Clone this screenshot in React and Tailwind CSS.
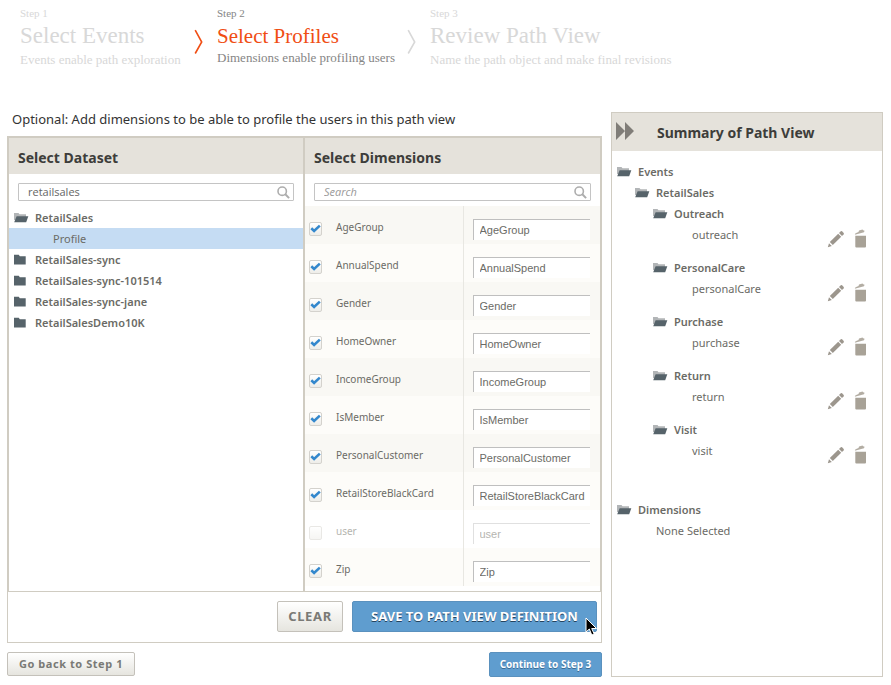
const steps = [
  { step: "Step 1", title: "Select Events", note: "Events enable path exploration", active: false, width: "w-[174px]" },
  { step: "Step 2", title: "Select Profiles", note: "Dimensions enable profiling users", active: true, width: "w-[190px]" },
  { step: "Step 3", title: "Review Path View", note: "Name the path object and make final revisions", active: false, width: "" },
];

const datasets = ["RetailSales-sync", "RetailSales-sync-101514", "RetailSales-sync-jane", "RetailSalesDemo10K"];

const dimensions = [
  "AgeGroup", "AnnualSpend", "Gender", "HomeOwner", "IncomeGroup",
  "IsMember", "PersonalCustomer", "RetailStoreBlackCard", "user", "Zip",
];

const events = [
  ["Outreach", "outreach"],
  ["PersonalCare", "personalCare"],
  ["Purchase", "purchase"],
  ["Return", "return"],
  ["Visit", "visit"],
];

function OpenFolder() {
  return (
    <svg width="15" height="11" viewBox="0 0 15 11" className="shrink-0" aria-hidden="true">
      <path d="M0 1h4.500l1 1.200h6.500v3.300L9 8H0z" fill="#b2b5b7" />
      <path d="M2.600 4.300H14.300L12.200 10.300H.2z" fill="#56636a" />
    </svg>
  );
}

function ClosedFolder() {
  return (
    <svg width="15" height="11" viewBox="0 0 15 11" className="shrink-0" aria-hidden="true">
      <path d="M0 .8h4.800l1 1.500h5.900v8.200H0z" fill="#56636a" />
    </svg>
  );
}

function Magnifier() {
  return (
    <svg width="13" height="13" viewBox="0 0 13 13" fill="none" stroke="#adadad" aria-hidden="true">
      <circle cx="5.200" cy="5.200" r="4.200" strokeWidth="1.600" />
      <path d="M8.300 8.300l3.800 3.800" strokeWidth="2" />
    </svg>
  );
}

function Chevron({ active }) {
  return (
    <svg width="10" height="26" viewBox="0 0 10 26" fill="none" stroke={active ? "#f04e14" : "#d8d8d8"} strokeWidth="1.600" className="mt-[29px] shrink-0" aria-hidden="true">
      <path d="M1.200 1.200L7.700 13 1.200 24.500" />
    </svg>
  );
}

function Pencil() {
  return (
    <svg width="18" height="18" viewBox="0 0 18 18" fill="#9c968d" aria-hidden="true">
      <path d="M.8 17.200l1.200-4 2.800 2.800z" />
      <path d="M2.800 12l8.400-8.300 3 3L5.800 15z" />
      <path d="M12 3l1.800-1.700q.7-.5 1.300 0l1.600 1.600q.5.700 0 1.400L15 6z" />
    </svg>
  );
}

function Trash() {
  return (
    <svg width="13" height="20" viewBox="0 0 13 20" aria-hidden="true">
      <path d="M.8 5.800l.7-1.600 3-1.300L5 1.500 8.500.4l.7.900 1.400.5L10 3.300z" fill="#b3ada3" />
      <path d="M1.300 6.700h10.700v10.800q0 1-1 1H2.300q-1 0-1-1z" fill="#a8a297" />
    </svg>
  );
}

function SearchBox({ label, ...input }) {
  return (
    <div className="mx-[9px] mt-[7px] flex h-[18px] items-center rounded-[1px] border border-[#c4c4c4] pr-[3px]">
      <input aria-label={label} className="min-w-0 flex-1 pl-[9px] font-['Open_Sans',sans-serif] text-[11px] leading-4 text-[#666] outline-none placeholder:text-[#999] placeholder:italic" {...input} />
      <Magnifier />
    </div>
  );
}

function CheckBox({ id, checked, dim }) {
  return (
    <span className={`grid size-[13px] place-items-center ${dim ? "opacity-50" : ""}`}>
      <input
        id={id}
        type="checkbox"
        defaultChecked={checked}
        className="peer col-start-1 row-start-1 block h-[14px] w-[13px] appearance-none rounded-[2px] border border-[#d4d2cd] bg-linear-to-b from-white to-[#eeede9]"
      />
      <svg width="11" height="11" viewBox="0 0 11 11" fill="none" stroke="#3488cd" strokeWidth="2.600" className="pointer-events-none invisible col-start-1 row-start-1 peer-checked:visible" aria-hidden="true">
        <path d="M1.300 5.300L4.100 8 9.800 2.600" />
      </svg>
    </span>
  );
}

function DimensionRow({ name, index }) {
  const off = name === "user";
  const back = off ? "bg-white" : index % 2 === 0 && index < 8 ? "bg-[#f9f8f4]" : "bg-[#fdfcf9]";
  const text = off ? "text-[#b5b5b0]" : "text-[#6b6b66]";
  return (
    <tr className={`h-[38px] ${back}`}>
      <td className="pt-[6px] pl-1 align-middle">
        <CheckBox id={`use-${name}`} checked={!off} dim={off} />
      </td>
      <td className="border-r border-[#e8e7e2] pt-1 align-middle">
        <label htmlFor={`use-${name}`} className={`block text-[10px] leading-4 ${text}`}>{name}</label>
      </td>
      <td className="pt-[9px] pr-[10px] pl-[9px] align-middle">
        <input
          aria-label={`Name for ${name}`}
          defaultValue={name}
          className={`block h-[21px] w-full border-t border-l bg-white pl-[6px] font-['Liberation_Sans',sans-serif] text-[11px] outline-none ${text} ${off ? "border-[#e0e0e0]" : "border-[#bfbfbf]"}`}
        />
      </td>
    </tr>
  );
}

export default function App() {
  return (
    <div className="bg-white font-['Noto_Sans','Open_Sans',sans-serif] text-[#6b6b66]">
      <header className="flex h-[112px] pl-5 font-['Liberation_Serif',serif]">
        {steps.map((s, i) => (
          <div key={s.step} className="flex">
            {i > 0 && <div className="flex w-[23px]"><Chevron active={s.active} /></div>}
            <div className={`${s.width} whitespace-nowrap pt-[5px] ${s.active ? "text-[#858585]" : "text-[#d8d8d8]"}`}>
              <p className="text-[11px] leading-4">{s.step}</p>
              <h2 className={`leading-[30px] ${s.active ? "text-[21px] text-[#f04e14]" : "text-[23px]"}`}>{s.title}</h2>
              <p className={`text-[13px] ${s.active ? "leading-[14px]" : "leading-[18px]"}`}>{s.note}</p>
            </div>
          </div>
        ))}
      </header>

      <div className="flex items-start gap-[9px] pr-2 pl-[7px]">
        <main className="min-w-0 flex-1">
          <p className="-mt-[3px] h-[25px] pl-[5px] text-[13px] leading-5 text-[#333]">Optional: Add dimensions to be able to profile the users in this path view</p>
          <div className="mt-[2px] border border-[#d0ccc2]">
            <div className="grid h-[455px] grid-cols-[294fr_297fr] border border-[#d0ccc2]">
              <section className="min-w-0">
                <h3 className="h-9 bg-[#e5e2db] pl-[9px] text-[14px] leading-10 font-bold text-[#3d3d3a]">Select Dataset</h3>
                <div className="pt-[2px]"><SearchBox label="Search datasets" defaultValue="retailsales" /></div>
                <ul className="mt-[6px] text-[11px] leading-[21px] font-semibold">
                  <li className="flex items-center gap-[6px] pl-[5px]"><OpenFolder />RetailSales</li>
                  <li className="bg-[#c5dcf3] pl-11 font-normal">Profile</li>
                  {datasets.map((d) => (
                    <li key={d} className="flex items-center gap-[6px] pl-[5px]"><ClosedFolder />{d}</li>
                  ))}
                </ul>
              </section>
              <section className="min-w-0 border-l-2 border-[#d0ccc2]">
                <h3 className="h-9 bg-[#e5e2db] pl-[9px] text-[14px] leading-10 font-bold text-[#3d3d3a]">Select Dimensions</h3>
                <div className="pt-[2px]"><SearchBox label="Search dimensions" placeholder="Search" /></div>
                <table className="mt-[5px] w-full table-fixed border-collapse">
                  <colgroup><col className="w-[31px]" /><col /><col className="w-[137px]" /></colgroup>
                  <tbody>
                    {dimensions.map((d, i) => <DimensionRow key={d} name={d} index={i} />)}
                  </tbody>
                </table>
              </section>
            </div>
            <div className="relative flex justify-end gap-[9px] pt-[9px] pr-1 pb-[10px] font-bold">
              <button className="h-[31px] w-[66px] rounded-[2px] border border-[#c4c1ba] bg-linear-to-b from-white to-[#e6e5df] text-[13px] tracking-wider text-[#7a7a76]">CLEAR</button>
              <button className="h-[31px] w-[245px] rounded-[2px] border border-[#5a91be] bg-[#5f9dcf] text-[13px] whitespace-nowrap text-white text-shadow-[0_1px_0_#24445f]">SAVE TO PATH VIEW DEFINITION</button>
              <svg width="13" height="20" viewBox="0 0 13 20" className="absolute right-[3px] bottom-[5px]" aria-hidden="true">
                <path d="M1 1v14l3.300-3 2.500 6 2.400-1-2.500-5.500H11.500z" fill="#000" stroke="#fff" />
              </svg>
            </div>
          </div>
          <div className="mt-[9px] flex justify-between font-bold">
            <button className="h-6 w-32 rounded-[2px] border border-[#c4c1ba] bg-linear-to-b from-white to-[#e6e5df] text-[11px] tracking-wider text-[#7a7a76]">Go back to Step 1</button>
            <button className="h-[25px] w-[113px] rounded-[2px] border border-[#5a91be] bg-[#5f9dcf] text-[10px] whitespace-nowrap text-white text-shadow-[0_1px_0_#3b6c94]">Continue to Step 3</button>
          </div>
        </main>

        <aside className="h-[565px] w-[272px] border border-[#d0ccc2] text-[11px] leading-[21px]">
          <div className="flex h-[38px] items-center bg-[#e5e2db] pl-1">
            <svg width="18" height="18" viewBox="0 0 18 18" fill="#807d78" className="mb-[2px]" aria-hidden="true"><path d="M0 0l9 9-9 9zM9 0l9 9-9 9z" /></svg>
            <h3 className="pl-[23px] text-[14px] font-bold text-[#3d3d3a]">Summary of Path View</h3>
          </div>
          <div className="flex items-center gap-[6px] pt-[10px] pl-[5px] font-semibold"><OpenFolder />Events</div>
          <div className="flex items-center gap-[6px] pl-[23px] font-semibold"><OpenFolder />RetailSales</div>
          {events.map(([group, name]) => (
            <div key={group} className="h-[54px]">
              <div className="flex items-center gap-[6px] pl-[41px] font-semibold"><OpenFolder />{group}</div>
              <div className="flex pr-[15px] pl-20">
                <span className="flex-1">{name}</span>
                <span className="flex gap-[9px] pt-[5px]">
                  <button aria-label={`Edit ${name}`}><Pencil /></button>
                  <button aria-label={`Delete ${name}`}><Trash /></button>
                </span>
              </div>
            </div>
          ))}
          <div className="mt-[26px] flex items-center gap-[6px] pl-[5px] font-semibold"><OpenFolder />Dimensions</div>
          <div className="pl-11">None Selected</div>
        </aside>
      </div>
    </div>
  );
}
